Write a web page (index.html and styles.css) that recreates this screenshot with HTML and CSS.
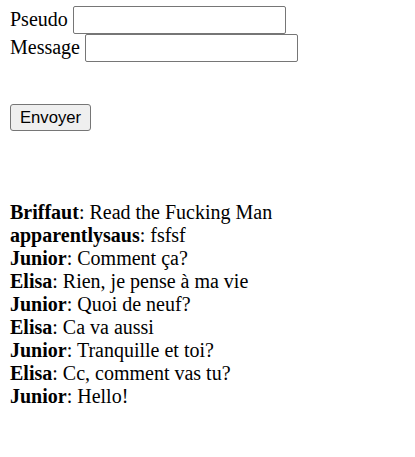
FILE: index.html
```html
<!DOCTYPE html>
<html lang="fr">
<head>
<meta charset="utf-8">
<title>Chat</title>
<link rel="stylesheet" href="styles.css">
</head>
<body>
<form class="form">
  <div class="field"><label class="label">Pseudo</label><input class="input" type="text"></div>
  <div class="field"><label class="label">Message</label><input class="input" type="text"></div>
  <button class="submit" type="button">Envoyer</button>
</form>
<div class="messages">
  <div class="msg"><b class="name">Briffaut</b>: Read the Fucking Man</div>
  <div class="msg"><b class="name">apparentlysaus</b>: fsfsf</div>
  <div class="msg"><b class="name">Junior</b>: Comment ça?</div>
  <div class="msg"><b class="name">Elisa</b>: Rien, je pense à ma vie</div>
  <div class="msg"><b class="name">Junior</b>: Quoi de neuf?</div>
  <div class="msg"><b class="name">Elisa</b>: Ca va aussi</div>
  <div class="msg"><b class="name">Junior</b>: Tranquille et toi?</div>
  <div class="msg"><b class="name">Elisa</b>: Cc, comment vas tu?</div>
  <div class="msg"><b class="name">Junior</b>: Hello!</div>
</div>
</body>
</html>
```
FILE: styles.css
```css
html { background: #fff; }
body {
  margin: 6px 10px;
  font-family: "Liberation Serif", "Times New Roman", serif;
  font-size: 20px;
  line-height: 23px;
  color: #000;
}
.form { margin: 0; }
.field {
  display: flex;
  align-items: center;
  height: 28px;
}
.label { margin-right: 5px; margin-top: -1px; }
.input {
  box-sizing: border-box;
  width: 213px;
  height: 28px;
  margin: 0;
  border: 1px solid #767676;
  border-radius: 2px;
  background: #fff;
  padding: 1px 3px;
  font: 16.67px "Liberation Sans", Arial, sans-serif;
}
.submit {
  display: block;
  box-sizing: border-box;
  width: 81px;
  height: 27px;
  margin: 42px 0 0 0;
  padding: 0;
  border: 1px solid #767676;
  border-radius: 3px;
  background: #efefef;
  color: #000;
  font: 16.67px "Liberation Sans", Arial, sans-serif;
}
.messages { margin-top: 70px; }
.name { font-weight: bold; }
```
